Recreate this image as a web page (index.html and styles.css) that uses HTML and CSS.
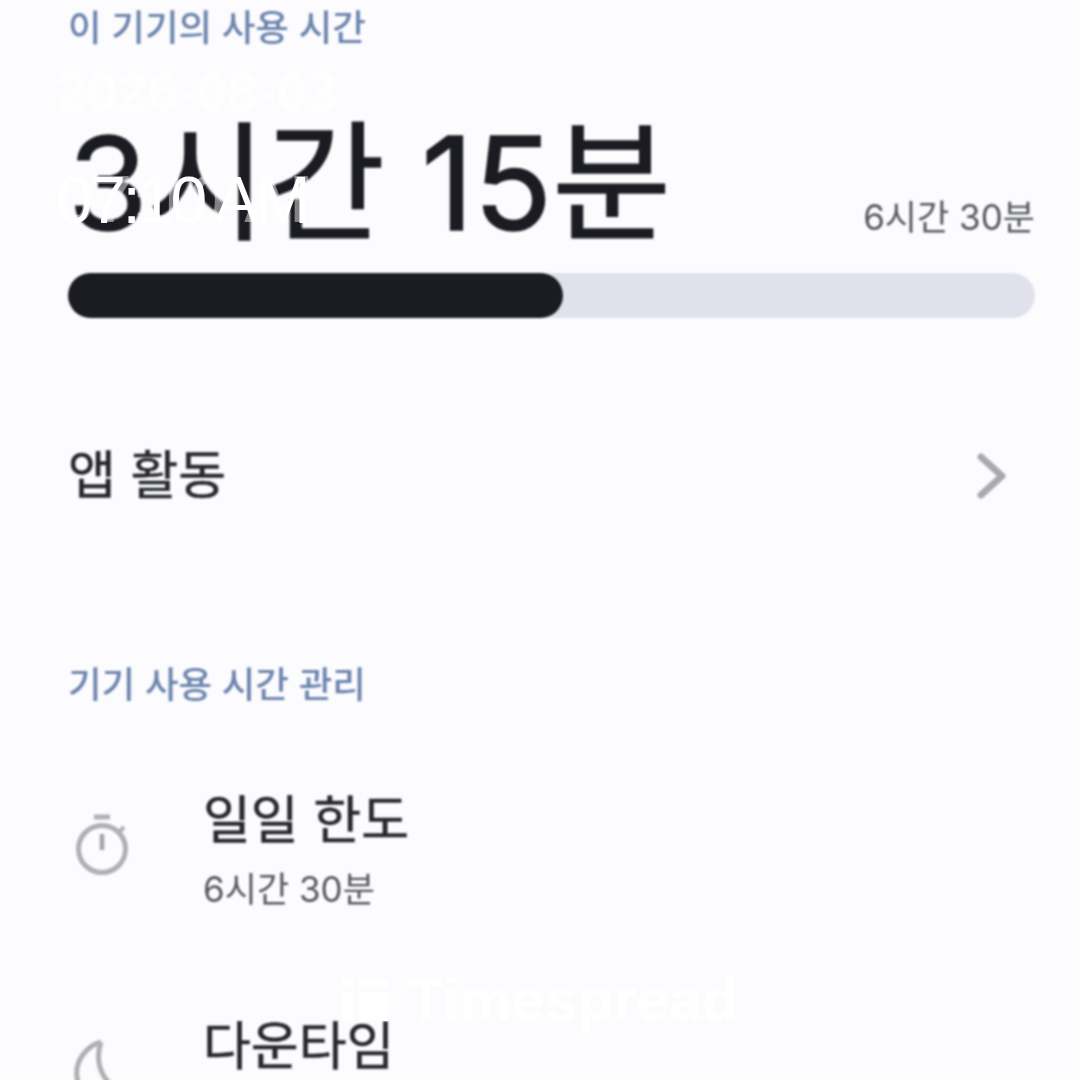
FILE: index.html
```html
<!DOCTYPE html>
<html lang="ko">
<head>
    <meta charset="UTF-8">
    <meta name="viewport" content="width=device-width, initial-scale=1.0">
    <title>기기 사용 시간</title>
    <link rel="stylesheet" href="styles.css">
</head>
<body>
    <div class="screen">
        <section class="usage">
            <h2 class="section-label">이 기기의 사용 시간</h2>
            <div class="usage-row">
                <span class="usage-total">3시간 15분</span>
                <span class="usage-limit">6시간 30분</span>
            </div>
            <div class="bar"><div class="bar-fill" style="width: 51.2%"></div></div>
        </section>

        <div class="activity-row">
            <span class="activity-title">앱 활동</span>
            <svg class="chevron" width="30" height="46" viewBox="0 0 30 46">
                <path d="M4 4 L25 23 L4 42" fill="none" stroke="#a9a9ab" stroke-width="7" stroke-linecap="round" stroke-linejoin="round"/>
            </svg>
        </div>

        <section class="manage">
            <h2 class="section-label">기기 사용 시간 관리</h2>

            <div class="item">
                <svg class="item-icon" width="56" height="66" viewBox="0 0 56 66">
                    <path d="M20 3 H36" fill="none" stroke="#b0b0b2" stroke-width="5"/>
                    <circle cx="28" cy="35" r="23.5" fill="none" stroke="#b0b0b2" stroke-width="5"/>
                    <path d="M28 20 V36" fill="none" stroke="#a4a4a6" stroke-width="4.5"/>
                    <path d="M45 18 L50 13" fill="none" stroke="#b0b0b2" stroke-width="4"/>
                </svg>
                <div class="item-text">
                    <div class="item-title">일일 한도</div>
                    <div class="item-sub">6시간 30분</div>
                </div>
            </div>

            <div class="item item-cut">
                <svg class="item-icon" width="56" height="66" viewBox="0 0 56 66">
                    <path d="M27 3 C10 8 1 24 3 38 C5 54 18 66 36 66 M27 3 C21 20 26 38 40 48" fill="none" stroke="#b0b0b2" stroke-width="5"/>
                </svg>
                <div class="item-text">
                    <div class="item-title">다운타임</div>
                </div>
            </div>
        </section>

        <!-- stamp laid over the screenshot -->
        <div class="stamp-date">2026-08-03</div>
        <div class="stamp-time-ghost">07:10 AM</div>
        <div class="stamp-time">07:10 AM</div>
        <div class="stamp-brand">
            <svg width="46" height="42" viewBox="0 0 46 42">
                <rect x="0" y="0" width="12" height="8" fill="#ffffff"/>
                <rect x="17" y="0" width="29" height="8" fill="#ffffff"/>
                <rect x="0" y="13" width="12" height="29" fill="#ffffff"/>
                <rect x="17" y="13" width="29" height="29" fill="#ffffff"/>
            </svg>
            <span>Timespread</span>
        </div>
    </div>
</body>
</html>
```

FILE: styles.css
```css
* {
    box-sizing: border-box;
}
body {
    margin: 0;
    background-color: #fcfcff;
    font-family: Inter, "Noto Sans CJK KR", sans-serif;
}
.screen {
    position: relative;
    width: 1080px;
    height: 1080px;
    overflow: hidden;
    padding: 2px 45px 0 68px;
}
.usage,
.activity-row,
.manage {
    filter: blur(0.8px);
}
.section-label {
    margin: 0;
    font-size: 36.5px;
    line-height: 52px;
    font-weight: 500;
    color: #6c84ad;
}
.usage-row {
    display: flex;
    justify-content: space-between;
    align-items: flex-end;
    margin-top: 54px;
}
.usage-total {
    font-size: 129px;
    line-height: 150px;
    font-weight: 400;
    color: #1b1c22;
    -webkit-text-stroke: 1.5px #1b1c22;
}
.usage-limit {
    font-size: 35px;
    line-height: 50px;
    font-weight: 400;
    color: #55575c;
    margin-bottom: 16px;
}
.bar {
    height: 45px;
    margin-top: 15px;
    background-color: #e1e1ec;
    border-radius: 23px;
}
.bar-fill {
    height: 100%;
    background-color: #1b1c22;
    border-radius: 23px;
}
.activity-row {
    display: flex;
    justify-content: space-between;
    align-items: center;
    margin-top: 123px;
    padding-right: 28px;
}
.activity-title,
.item-title {
    font-size: 52px;
    line-height: 70px;
    font-weight: 400;
    color: #26272c;
    -webkit-text-stroke: 0.5px #26272c;
}
.manage {
    margin-top: 148px;
}
.item {
    display: flex;
    align-items: center;
    min-height: 126px;
    margin-top: 75px;
}
.item-icon {
    flex-shrink: 0;
    margin: -6px 73px 0 6px;
}
.item-sub {
    margin-top: 8px;
    font-size: 35px;
    line-height: 50px;
    font-weight: 400;
    color: #55575c;
}
.item + .item {
    margin-top: 98px;
}
.item-cut .item-text {
    align-self: flex-start;
}
.stamp-date {
    position: absolute;
    left: 56px;
    top: 62px;
    font-family: "Liberation Sans", sans-serif;
    font-size: 55px;
    line-height: 60px;
    font-weight: 700;
    color: #ffffff;
    opacity: 0.7;
}
.stamp-time-ghost {
    position: absolute;
    left: 58px;
    top: 166px;
    font-family: "Liberation Sans", sans-serif;
    font-size: 66px;
    line-height: 66px;
    font-weight: 700;
    color: #ffffff;
    opacity: 0.45;
}
.stamp-time {
    position: absolute;
    left: 56px;
    top: 167px;
    font-family: "Liberation Sans", sans-serif;
    font-size: 66px;
    line-height: 66px;
    letter-spacing: -3.5px;
    color: #ffffff;
}
.stamp-brand {
    position: absolute;
    left: 342px;
    top: 979px;
    display: flex;
    align-items: center;
    gap: 20px;
    font-family: "Liberation Sans", sans-serif;
    font-size: 59px;
    line-height: 42px;
    font-weight: 700;
    color: #ffffff;
}
```
